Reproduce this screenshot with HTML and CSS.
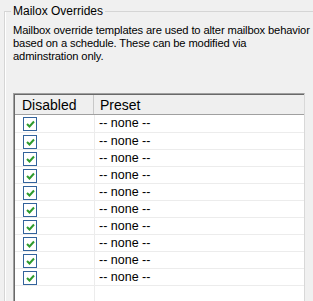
FILE: index.html
```html
<!DOCTYPE html>
<html lang="en">
<head>
  <meta charset="UTF-8">
  <title>Mailbox Overrides</title>
  <link rel="stylesheet" href="styles.css">
</head>
<body>

  <!-- Group box -->
  <fieldset class="group">
    <legend>Mailox Overrides</legend>
    <p class="desc">Mailbox override templates are used to alter mailbox behavior based on a schedule. These can be modified via adminstration only.</p>

    <!-- Preset list -->
    <div class="grid">
      <div class="grid-head">
        <div class="col-check">Disabled</div>
        <div class="col-name">Preset</div>
      </div>
      <div class="grid-body" id="gridBody"></div>
    </div>
  </fieldset>

  <script>
    const gridBody = document.getElementById('gridBody');
    const tick = '<svg width="9" height="8" viewBox="0 0 9 8"><path d="M1 4 L3.5 6.5 L8 1.5" fill="none" stroke="#2e9b2e" stroke-width="2"/></svg>';

    for (let i = 0; i < 10; i++) {
      const row = document.createElement('div');
      row.className = 'grid-row';
      row.innerHTML = '<div class="col-check"><span class="checkbox">' + tick + '</span></div>' +
                      '<div class="col-name">-- none --</div>';
      gridBody.appendChild(row);
    }
    // filler row under the last item
    const filler = document.createElement('div');
    filler.className = 'grid-row filler';
    filler.innerHTML = '<div class="col-check"></div><div class="col-name"></div>';
    gridBody.appendChild(filler);
  </script>

</body>
</html>
```

FILE: styles.css
```css
* { box-sizing: border-box; }
html, body { margin: 0; padding: 0; overflow: hidden; }
body {
  font-family: 'Liberation Sans', Arial, sans-serif;
  font-size: 12px;
  color: #000;
  background: #f0f0f0;
  height: 301px;
}

/* Group box */
.group {
  margin: 4px -30px 0 4px;
  padding: 0 0 0 8px;
  border: 1px solid #d5d5d5;
  box-shadow: inset 1px 0 0 #fff;
  min-width: 0;
  height: 320px;
}
.group legend {
  padding: 0 2px;
  margin-left: -2px;
  line-height: 14px;
}
.desc {
  margin: 6px 0 0 0;
  width: 298px;
  font-size: 11.2px;
  letter-spacing: -0.14px;
  line-height: 13px;
}

/* List grid */
.grid {
  margin-top: 30px;
  width: 292px;
  height: 220px;
  background: #fff;
  border-top: 1px solid #a0a0a0;
  border-left: 1px solid #a0a0a0;
  border-right: 1px solid #d8d8d8;
  box-shadow: inset 1px 1px 0 #696969;
  padding: 1px 0 0 1px;
}
.grid-head {
  display: flex;
  height: 20px;
  background: #efefef;
  border-bottom: 1px solid #a0a0a0;
  font-size: 14px;
  line-height: 20px;
}
.grid-head .col-check {
  width: 79px;
  padding-left: 7px;
  border-right: 1px solid #c8c8c8;
}
.grid-head .col-name { padding-left: 6px; }

.grid-row {
  display: flex;
  height: 17px;
  border-bottom: 1px solid #ececec;
  font-size: 12.5px;
}
.grid-row:first-child { height: 18px; }
.grid-row.filler { height: 40px; border-bottom: none; }
.grid-row .col-check {
  width: 80px;
  border-right: 1px solid #ececec;
  padding: 2px 0 0 8px;
}
.grid-row .col-name {
  padding-left: 4px;
  line-height: 17px;
}
.checkbox {
  display: flex;
  align-items: center;
  justify-content: center;
  width: 14px;
  height: 14px;
  border: 1px solid #33639c;
  background: #fff;
}
```
